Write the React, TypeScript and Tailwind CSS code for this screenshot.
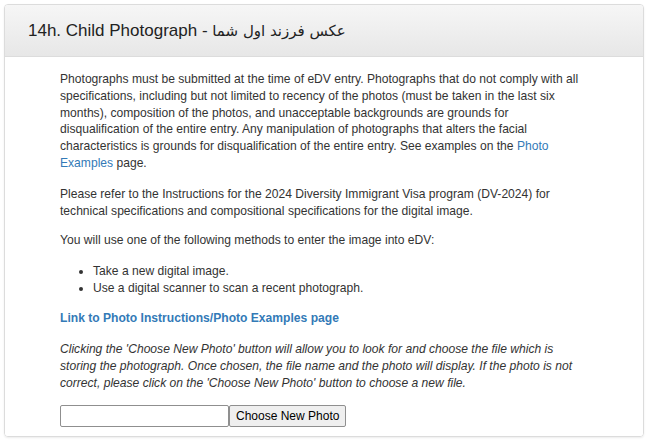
import React from "react";

export default function App() {
  return (
    <div className="w-[650px] h-[442px] bg-white p-[4px] pr-[6px] pb-[5px] font-['Liberation_Sans',Arial,sans-serif] text-[#333]">
      <div className="h-full rounded-[4px] border border-[#dcdcdc] shadow-[0_1px_2px_rgba(0,0,0,0.08)] overflow-hidden flex flex-col">
        <div className="h-[52px] shrink-0 flex items-center pl-[23px] border-b border-[#dcdcdc] bg-gradient-to-b from-[#f6f6f6] to-[#e7e7e7]">
          <h2 className="text-[17px] leading-none text-[#222] font-['Liberation_Sans','Noto_Sans',sans-serif] -mt-[1px]">
            14h. Child Photograph - <span dir="rtl" className="font-['DejaVu_Sans','Noto_Sans',sans-serif] text-[15px]">عكس فرزند اول شما</span>
          </h2>
        </div>
        <div className="flex-1 bg-white pt-[14px] pl-[55px] pr-[59px] text-[12.1px] leading-[16.8px]">
          <p className="mb-[14px]">
            Photographs must be submitted at the time of eDV entry. Photographs that do not comply with all specifications, including but not limited to recency of the photos (must be taken in the last six months), composition of the photos, and unacceptable backgrounds are grounds for disqualification of the entire entry. Any manipulation of photographs that alters the facial characteristics is grounds for disqualification of the entire entry. See examples on the{" "}
            <a className="text-[#337ab7]">Photo Examples</a> page.
          </p>
          <p className="mb-[13px]">
            Please refer to the Instructions for the 2024 Diversity Immigrant Visa program (DV-2024) for technical specifications and compositional specifications for the digital image.
          </p>
          <p className="mb-[14px]">You will use one of the following methods to enter the image into eDV:</p>
          <ul className="list-disc pl-[33px] mb-[13.5px]">
            <li>Take a new digital image.</li>
            <li>Use a digital scanner to scan a recent photograph.</li>
          </ul>
          <p className="mb-[14px]">
            <a className="text-[#337ab7] font-bold">Link to Photo Instructions/Photo Examples page</a>
          </p>
          <p className="italic mb-[13.5px]">
            Clicking the 'Choose New Photo' button will allow you to look for and choose the file which is storing the photograph. Once chosen, the file name and the photo will display. If the photo is not correct, please click on the 'Choose New Photo' button to choose a new file.
          </p>
          <div className="flex items-center">
            <div className="w-[169px] h-[22px] border border-[#8f8f8f] rounded-[2px] bg-white" />
            <button className="h-[22px] px-[6px] border border-[#8f8f8f] rounded-[2px] bg-[#efefef] text-[12px] text-black leading-none">
              Choose New Photo
            </button>
          </div>
        </div>
      </div>
    </div>
  );
}
